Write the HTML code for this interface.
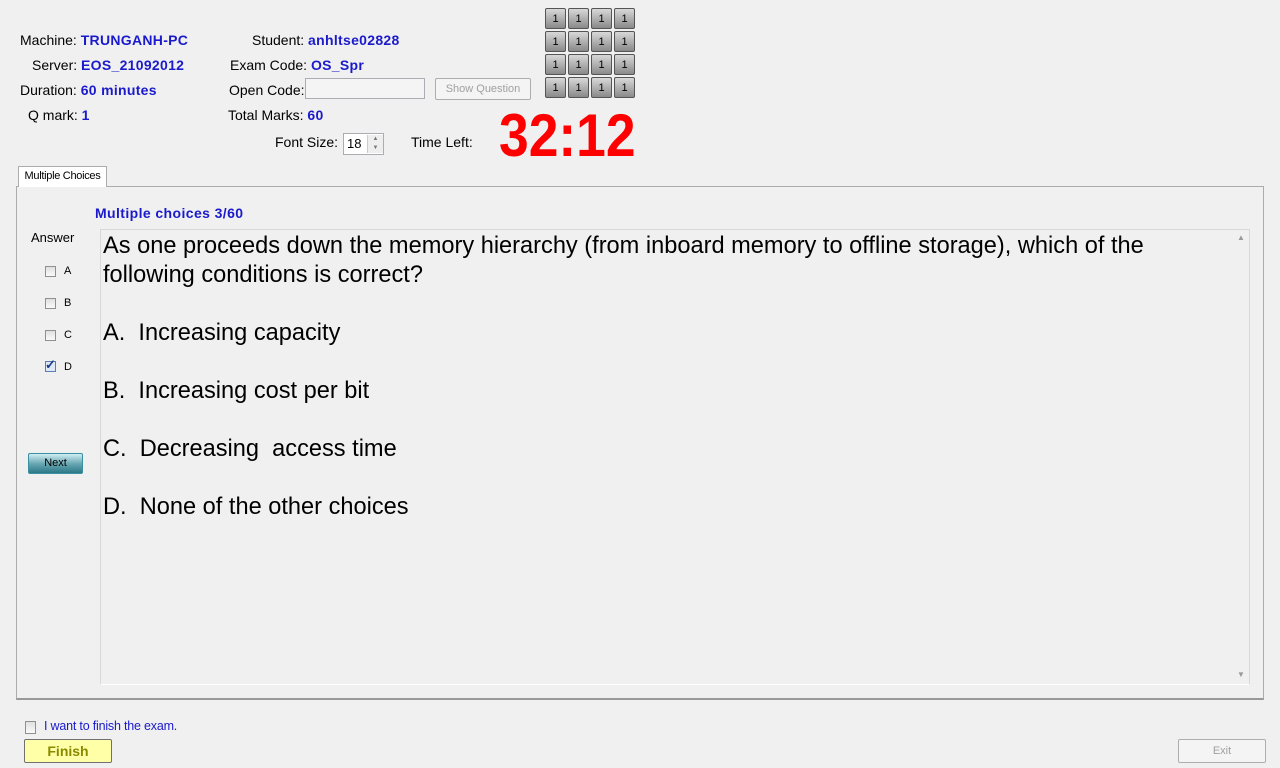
<!DOCTYPE html>
<html><head><style>
body{margin:0;width:1280px;height:768px;background:#f0f0f0;font-family:"Liberation Sans",sans-serif;position:relative;overflow:hidden}
.a{position:absolute;white-space:nowrap}
.l{font-size:14px;color:#000}
.v{font-size:14px;color:#1a1acc;font-weight:bold;letter-spacing:0.3px}
.nb{position:absolute;width:21px;height:21px;background:linear-gradient(#d8d8d8,#8a8a8a);border:1px solid #555;border-radius:2px;font-size:11px;text-align:center;line-height:21px;box-sizing:border-box}
.cb{position:absolute;width:11px;height:11px;border:1px solid #8e8f8f;background:linear-gradient(#e0e0e0,#fafafa);box-sizing:border-box}
.q{font-size:23.6px;color:#000;line-height:29px}
</style></head><body>
<div class="a l" style="left:20px;top:32px">Machine: <span class="v">TRUNGANH-PC</span></div>
<div class="a l" style="left:32px;top:57px">Server: <span class="v">EOS_21092012</span></div>
<div class="a l" style="left:20px;top:82px">Duration: <span class="v">60 minutes</span></div>
<div class="a l" style="left:28px;top:107px">Q mark: <span class="v">1</span></div>
<div class="a l" style="left:252px;top:32px">Student: <span class="v">anhltse02828</span></div>
<div class="a l" style="left:230px;top:57px">Exam Code: <span class="v">OS_Spr</span></div>
<div class="a l" style="left:229px;top:82px">Open Code:</div>
<div class="a" style="left:305px;top:78px;width:120px;height:21px;border:1px solid #abadb3;background:#f4f4f4;box-sizing:border-box"></div>
<div class="a" style="left:435px;top:78px;width:96px;height:22px;border:1px solid #adadad;border-radius:2px;background:#f4f4f4;box-sizing:border-box;font-size:11px;color:#a0a0a0;text-align:center;line-height:20px">Show Question</div>
<div class="a l" style="left:228px;top:107px">Total Marks: <span class="v">60</span></div>
<div class="a l" style="left:275px;top:134px">Font Size:</div>
<div class="a" style="left:343px;top:133px;width:41px;height:22px;border:1px solid #abadb3;background:#fff;box-sizing:border-box;font-size:13px;line-height:20px;padding-left:3px">18</div>
<div class="a" style="left:367px;top:135px;width:15px;height:18px;background:#eee;border-left:1px solid #ccc;font-size:6px;color:#777;text-align:center;line-height:9px">▲<br>▼</div>
<div class="a l" style="left:411px;top:134px">Time Left:</div>
<div class="a" style="left:499px;top:103px;font-size:60px;font-weight:bold;color:#f00;line-height:66px;transform:scaleX(0.89);transform-origin:left top">32:12</div>
<div id="g"></div>
<div class="a" style="left:18px;top:166px;width:89px;height:21px;border:1px solid #acacac;border-bottom:none;background:#fff;font-size:11px;text-align:center;line-height:19px;box-sizing:border-box;z-index:2;letter-spacing:-0.3px">Multiple Choices</div>
<div class="a" style="left:16px;top:186px;width:1248px;height:514px;border:1px solid #acacac;border-bottom:2px solid #999;background:#f0f0f0;box-sizing:border-box"></div>
<div class="a" style="left:95px;top:205px;font-size:14px;font-weight:bold;color:#1a1acc;letter-spacing:0.4px">Multiple choices 3/60</div>
<div class="a" style="left:31px;top:230px;font-size:13px">Answer</div>
<div class="cb" style="left:45px;top:266px"></div><div class="a" style="left:64px;top:265px;font-size:11px">A</div>
<div class="cb" style="left:45px;top:298px"></div><div class="a" style="left:64px;top:297px;font-size:11px">B</div>
<div class="cb" style="left:45px;top:330px"></div><div class="a" style="left:64px;top:329px;font-size:11px">C</div>
<div class="cb" style="left:45px;top:361px;background:#dfe8f5;border-color:#5a7fb0"></div><div class="a" style="left:45px;top:357px;font-size:13px;color:#1a3a8a;font-weight:bold">✓</div><div class="a" style="left:64px;top:361px;font-size:11px">D</div>
<div class="a" style="left:28px;top:453px;width:55px;height:21px;border:1px solid #3a8fa0;border-radius:2px;background:linear-gradient(#d0eef2,#6aa8b4 50%,#2c7888);font-size:11px;text-align:center;line-height:19px;box-sizing:border-box">Next</div>
<div class="a" style="left:100px;top:229px;width:1150px;height:456px;border:1px solid #d8d8d8;border-bottom-color:#fff;box-sizing:border-box;background:#f0f0f0"></div>
<div class="a" style="left:1237px;top:233px;font-size:8px;color:#999">▲</div>
<div class="a" style="left:1237px;top:670px;font-size:8px;color:#999">▼</div>
<div class="a q" style="left:103px;top:232px">As one proceeds down the memory hierarchy (from inboard memory to offline storage), which of the<br>following conditions is correct?</div>
<div class="a q" style="left:103px;top:319px">A.&nbsp; Increasing capacity</div>
<div class="a q" style="left:103px;top:377px">B.&nbsp; Increasing cost per bit</div>
<div class="a q" style="left:103px;top:435px">C.&nbsp; Decreasing&nbsp; access time</div>
<div class="a q" style="left:103px;top:493px">D.&nbsp; None of the other choices</div>
<div class="cb" style="left:25px;top:721px;height:13px"></div>
<div class="a" style="left:44px;top:719px;font-size:12.5px;color:#1a1acc;letter-spacing:-0.2px">I want to finish the exam.</div>
<div class="a" style="left:24px;top:739px;width:88px;height:24px;border:1px solid #707070;border-radius:2px;background:#ffffa8;font-size:14px;font-weight:bold;color:#8a8a00;text-align:center;line-height:22px;box-sizing:border-box">Finish</div>
<div class="a" style="left:1178px;top:739px;width:88px;height:24px;border:1px solid #adadad;border-radius:2px;background:#f4f4f4;font-size:11px;color:#a0a0a0;text-align:center;line-height:22px;box-sizing:border-box">Exit</div>
<script>
var g=document.getElementById('g'),h='';
for(var r=0;r<4;r++)for(var c=0;c<4;c++)h+='<div class="nb" style="left:'+(545+c*23)+'px;top:'+(8+r*23)+'px">1</div>';
g.innerHTML=h;
</script>
</body></html>
